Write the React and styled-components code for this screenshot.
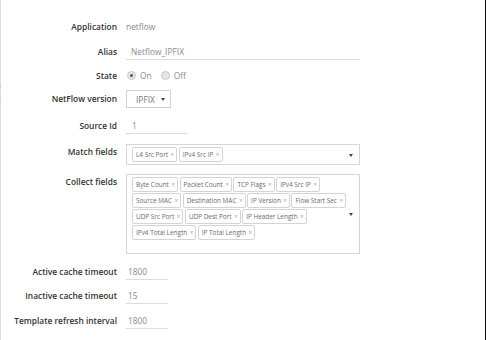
import React from "react"
import styled, {createGlobalStyle} from "styled-components"

const GlobalStyle = createGlobalStyle`
    html, body { margin: 0; padding: 0; background: #fff; }
    body { font-family: "Open Sans", "Liberation Sans", sans-serif; }
`

const Page = styled.div`
    display: flex;
    width: 487px;
    height: 340px;
    overflow: hidden;
    background: #fff;
`

//полоска слева, с оранжевыми метками
const EdgeStrip = styled.div`
    width: 1px;
    flex: none;
    background: linear-gradient(to bottom,
        #dedede 0, #dedede 84px, #f3c9a8 84px, #f3c9a8 88px,
        #dedede 88px, #dedede 99px, #f3c9a8 99px, #f3c9a8 103px,
        #dedede 103px);
`

const RightEdge = styled.div`
    width: 1px;
    flex: none;
    margin-right: 1px;
    background: #111;
`

const Form = styled.div`
    flex: 1;
    display: flex;
    flex-direction: column;
    padding-top: 15px;
`

const Row = styled.div`
    display: grid;
    grid-template-columns: 116px 234px;
    column-gap: 9px;
    align-items: ${props => props.$top ? "start" : "center"};
    height: ${props => props.$h}px;
`

const Label = styled.div`
    text-align: right;
    font-weight: 600;
    font-size: 8.4px;
    line-height: 14px;
    color: #333;
    white-space: nowrap;
    padding-top: ${props => props.$pt || 0}px;
`

const Value = styled.div`
    font-size: 8.4px;
    line-height: 14px;
    color: #8a8a8a;
`

const TextField = styled.div`
    width: ${props => props.$w}px;
    font-size: 8.4px;
    line-height: 12px;
    padding: 2px 0 1px ${props => props.$pl || 2}px;
    color: #8a8a8a;
    border-bottom: 1px solid #dcdcdc;
    box-sizing: border-box;
    height: 16px;
`

const Radios = styled.div`
    display: flex;
    align-items: center;
    gap: 8px;
    font-size: 8.4px;
    color: #8a8a8a;
`

const RadioItem = styled.label`
    display: flex;
    align-items: center;
    gap: 4px;
`

const RadioDot = styled.span`
    width: 7px;
    height: 7px;
    border-radius: 50%;
    border: 1px solid #c8c8c8;
    background: #e6e6e6;
    margin-left: 1px;
    display: flex;
    align-items: center;
    justify-content: center;
    &::after {
        content: "";
        width: 3px;
        height: 3px;
        border-radius: 50%;
        background: ${props => props.$on ? "#555" : "transparent"};
    }
`

const SelectBox = styled.div`
    width: 45px;
    height: 18px;
    box-sizing: border-box;
    border: 1px solid #d2d2d2;
    display: flex;
    align-items: center;
    justify-content: space-between;
    padding: 0 5px 0 9px;
    font-size: 8.4px;
    color: #777;
`

const Caret = styled.span`
    width: 0;
    height: 0;
    border-left: 2.5px solid transparent;
    border-right: 2.5px solid transparent;
    border-top: 3px solid #444;
`

const MultiBox = styled.div`
    width: 234px;
    height: ${props => props.$h}px;
    margin-top: 4px;
    box-sizing: border-box;
    border: 1px solid #d6d6d6;
    display: flex;
    align-items: flex-start;
    padding: 2px 6px 2px 5px;
    position: relative;
`

const Chips = styled.div`
    display: flex;
    flex-wrap: wrap;
    gap: 1px 1.5px;
    width: 216px;
`

const Chip = styled.span`
    display: inline-flex;
    align-items: center;
    height: 15px;
    box-sizing: border-box;
    padding: 0 2px 0 3px;
    border: 1px solid #d4d4d4;
    border-radius: 2px;
    font-size: 6.4px;
    color: #6a6a6a;
    white-space: nowrap;
`

const ChipX = styled.span`
    margin-left: 2.5px;
    color: #aaa;
    font-size: 6.4px;
`

const BoxCaret = styled(Caret)`
    position: absolute;
    right: 6px;
    top: 50%;
    margin-top: -1px;
`

const matchFields = ["L4 Src Port", "IPv4 Src IP"]
const collectFields = [
    "Byte Count", "Packet Count", "TCP Flags", "IPv4 Src IP",
    "Source MAC", "Destination MAC", "IP Version", "Flow Start Sec",
    "UDP Src Port", "UDP Dest Port", "IP Header Length",
    "IPv4 Total Length", "IP Total Length",
]

const ChipList = ({items}) => (
    <Chips>
        {items.map(item => (
            <Chip key={item}>{item}<ChipX>×</ChipX></Chip>
        ))}
    </Chips>
)

const App = () => {
    return (
        <>
            <GlobalStyle/>
            <Page>
                <EdgeStrip/>
                <Form>
                    <Row $h={24}>
                        <Label>Application</Label>
                        <Value>netflow</Value>
                    </Row>
                    <Row $h={26}>
                        <Label>Alias</Label>
                        <TextField $w={234} $pl={5}>Netflow_IPFIX</TextField>
                    </Row>
                    <Row $h={21}>
                        <Label>State</Label>
                        <Radios>
                            <RadioItem><RadioDot $on/>On</RadioItem>
                            <RadioItem><RadioDot/>Off</RadioItem>
                        </Radios>
                    </Row>
                    <Row $h={26}>
                        <Label>NetFlow version</Label>
                        <SelectBox>IPFIX<Caret/></SelectBox>
                    </Row>
                    <Row $h={28}>
                        <Label>Source Id</Label>
                        <TextField $w={61} $pl={6}>1</TextField>
                    </Row>
                    <Row $h={30} $top>
                        <Label $pt={5}>Match fields</Label>
                        <MultiBox $h={21}>
                            <ChipList items={matchFields}/>
                            <BoxCaret/>
                        </MultiBox>
                    </Row>
                    <Row $h={91} $top>
                        <Label $pt={5}>Collect fields</Label>
                        <MultiBox $h={80}>
                            <ChipList items={collectFields}/>
                            <BoxCaret/>
                        </MultiBox>
                    </Row>
                    <Row $h={22}>
                        <Label>Active cache timeout</Label>
                        <TextField $w={42}>1800</TextField>
                    </Row>
                    <Row $h={25}>
                        <Label>Inactive cache timeout</Label>
                        <TextField $w={42}>15</TextField>
                    </Row>
                    <Row $h={25}>
                        <Label>Template refresh interval</Label>
                        <TextField $w={42}>1800</TextField>
                    </Row>
                </Form>
                <RightEdge/>
            </Page>
        </>
    )
}

export default App
